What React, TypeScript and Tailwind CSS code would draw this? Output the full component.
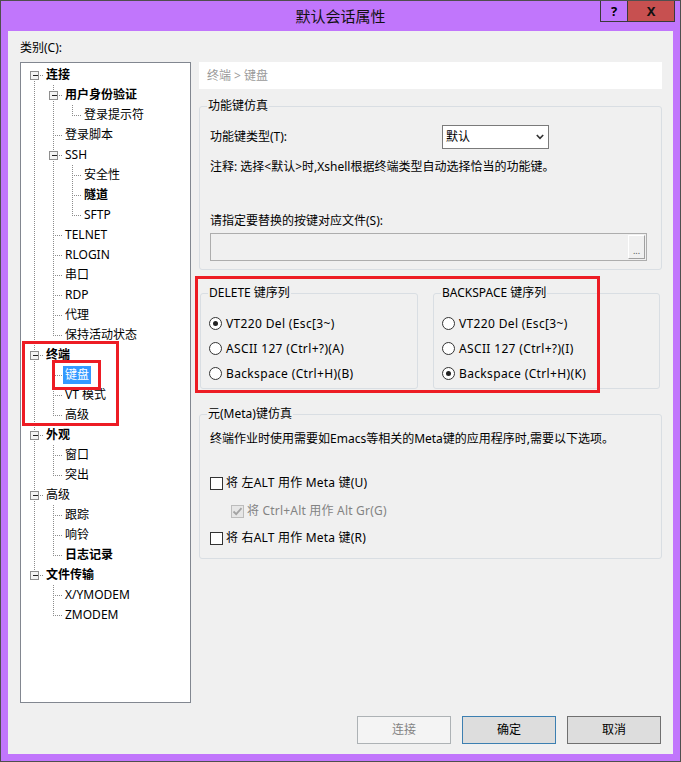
import React from 'react';

type TreeNode = { label: string; bold?: boolean; selected?: boolean; children?: TreeNode[] };

type Row = {
  label: string;
  bold?: boolean;
  selected?: boolean;
  level: number;
  hasChildren: boolean;
  isLast: boolean;
  firstRoot: boolean;
  cont: boolean[];
};

const tree: TreeNode[] = [
  {
    label: '连接',
    bold: true,
    children: [
      { label: '用户身份验证', bold: true, children: [{ label: '登录提示符' }] },
      { label: '登录脚本' },
      { label: 'SSH', children: [{ label: '安全性' }, { label: '隧道', bold: true }, { label: 'SFTP' }] },
      { label: 'TELNET' },
      { label: 'RLOGIN' },
      { label: '串口' },
      { label: 'RDP' },
      { label: '代理' },
      { label: '保持活动状态' },
    ],
  },
  { label: '终端', bold: true, children: [{ label: '键盘', selected: true }, { label: 'VT 模式' }, { label: '高级' }] },
  { label: '外观', bold: true, children: [{ label: '窗口' }, { label: '突出' }] },
  { label: '高级', children: [{ label: '跟踪' }, { label: '响铃' }, { label: '日志记录', bold: true }] },
  { label: '文件传输', bold: true, children: [{ label: 'X/YMODEM' }, { label: 'ZMODEM' }] },
];

function flatten(nodes: TreeNode[], level: number, cont: boolean[], out: Row[]) {
  nodes.forEach((n, i) => {
    const isLast = i === nodes.length - 1;
    out.push({
      label: n.label,
      bold: n.bold,
      selected: n.selected,
      level,
      hasChildren: !!n.children?.length,
      isLast,
      firstRoot: level === 0 && i === 0,
      cont: [...cont],
    });
    if (n.children) flatten(n.children, level + 1, [...cont, !isLast], out);
  });
  return out;
}

const rows = flatten(tree, 0, [], []);
const DOT = '#8c8c8c';

const TreeRow = ({ row }: { row: Row }) => {
  const base = 13 + 19 * row.level;
  const w = base + 10;
  return (
    <div className="flex h-[20px] items-center">
      <svg width={w} height={20} className="shrink-0" shapeRendering="crispEdges">
        {row.cont.map((c, a) =>
          c ? (
            <line key={a} x1={13 + 19 * a + 0.5} y1={0} x2={13 + 19 * a + 0.5} y2={20} stroke={DOT} strokeDasharray="1 1" />
          ) : null
        )}
        <line
          x1={base + 0.5}
          y1={row.firstRoot ? 10 : 0}
          x2={base + 0.5}
          y2={row.isLast ? 11 : 20}
          stroke={DOT}
          strokeDasharray="1 1"
        />
        <line x1={base + (row.hasChildren ? 6 : 2)} y1={10.5} x2={w} y2={10.5} stroke={DOT} strokeDasharray="1 1" />
        {row.hasChildren && (
          <g>
            <rect x={base - 3.5} y={6.5} width={8} height={8} fill="#f4f4f4" stroke="#8f8f8f" />
            <line x1={base - 1} y1={10.5} x2={base + 4} y2={10.5} stroke="#222" />
          </g>
        )}
      </svg>
      <span
        className={`h-[18px] whitespace-nowrap px-[2px] leading-[18px] ${row.bold ? 'font-bold' : ''} ${
          row.selected ? 'bg-[#3399ff] text-white' : 'text-black'
        }`}
      >
        {row.label}
      </span>
    </div>
  );
};

const Radio = ({ checked, label }: { checked?: boolean; label: string }) => (
  <div className="flex h-[25px] items-center">
    <span className="flex h-[13px] w-[13px] shrink-0 items-center justify-center rounded-full border border-[#333] bg-white">
      {checked && <span className="h-[5px] w-[5px] rounded-full bg-[#222]" />}
    </span>
    <span className="ml-[4px] whitespace-nowrap leading-[16px] tracking-[0.35px]">{label}</span>
  </div>
);

const Check = ({ label, disabled, checked }: { label: string; disabled?: boolean; checked?: boolean }) => (
  <div className="flex h-[16px] items-center">
    <span
      className={`flex h-[13px] w-[13px] shrink-0 items-center justify-center border ${
        disabled ? 'border-[#bcbcbc] bg-[#e6e6e6]' : 'border-[#333] bg-white'
      }`}
    >
      {checked && (
        <svg width="11" height="11" viewBox="0 0 11 11">
          <path d="M1.5 5.5 L4.2 8.2 L9.5 2.2" fill="none" stroke="#a3a3a3" strokeWidth="1.8" />
        </svg>
      )}
    </span>
    <span className={`ml-[3px] whitespace-nowrap leading-[16px] tracking-[0.2px] ${disabled ? 'text-[#838383]' : ''}`}>
      {label}
    </span>
  </div>
);

export default function App() {
  return (
    <div className="relative flex h-[762px] w-[681px] flex-col border border-[#4f4f4f] bg-[#c176fc] font-['Noto_Sans','Noto_Sans_CJK_SC',sans-serif] text-[12px] text-black">
      {/* title bar */}
      <div className="relative flex h-[30px] shrink-0 items-center justify-center">
        <span className="text-[15px] leading-[20px] text-[#111]">默认会话属性</span>
        <div className="absolute right-[5px] top-0 flex h-[21px] border border-t-0 border-[#3a3a3a]">
          <div className="flex w-[27px] items-center justify-center border-r border-[#3a3a3a] text-[13px] font-bold leading-none">
            ?
          </div>
          <div className="flex w-[46px] items-center justify-center bg-[#c75050] text-[13px] font-bold leading-none text-[#111]">
            X
          </div>
        </div>
      </div>

      {/* client area */}
      <div className="mx-[7px] flex h-[723px] shrink-0 flex-col bg-[#f0f0f0]">
        <div className="flex h-[672px] pl-[12px]">
          <div className="flex w-[171px] flex-col">
            <div className="h-[31px] pt-[9px] leading-[16px]">类别(C):</div>
            <div className="h-[641px] border border-[#828790] bg-white pt-[2px]">
              {rows.map((r, i) => (
                <TreeRow key={i} row={r} />
              ))}
            </div>
          </div>

          <div className="ml-[8px] flex w-[463px] flex-col pt-[31px]">
            <div className="flex h-[27px] items-center bg-white pl-[8px] text-[#9a9a9a]">终端 &gt; 键盘</div>

            <fieldset className="mt-[9px] rounded-[3px] border border-[#d9dee3]">
              <legend className="ml-[7px] px-[1px] leading-[16px]">功能键仿真</legend>
              <div className="pb-[8px] pl-[10px]">
                <div className="mt-[11px] flex h-[24px] items-center">
                  <span className="w-[232px] leading-[16px]">功能键类型(T):</span>
                  <div className="flex h-[24px] w-[107px] items-center justify-between border border-[#7a7a7a] bg-white pl-[3px] pr-[4px]">
                    <span className="leading-[16px]">默认</span>
                    <svg width="8" height="6" viewBox="0 0 8 6">
                      <path d="M0.8 1 L4 4.4 L7.2 1" fill="none" stroke="#333" strokeWidth="1.6" />
                    </svg>
                  </div>
                </div>
                <div className="mt-[10px] leading-[16px]">注释: 选择&lt;默认&gt;时,Xshell根据终端类型自动选择恰当的功能键。</div>
                <div className="mt-[38px] leading-[16px]">请指定要替换的按键对应文件(S):</div>
                <div className="mt-[4px] flex h-[28px] w-[437px] items-center justify-end border border-[#adadad] bg-[#f0f0f0] pr-[1px]">
                  <div className="flex h-[24px] w-[17px] items-end justify-center border-b border-l border-r border-t border-b-[#a0a0a0] border-l-white border-r-[#a0a0a0] border-t-white pb-[3px] text-[9px] leading-[9px] text-[#555]">
                    ...
                  </div>
                </div>
              </div>
            </fieldset>

            <div className="mt-[15px] flex">
              <fieldset className="ml-[1px] w-[218px] rounded-[3px] border border-[#d9dee3]">
                <legend className="ml-[7px] px-[1px] leading-[16px]">DELETE 键序列</legend>
                <div className="mt-[10px] pb-[2px] pl-[8px]">
                  <Radio checked label="VT220 Del (Esc[3~)" />
                  <Radio label="ASCII 127 (Ctrl+?)(A)" />
                  <Radio label="Backspace (Ctrl+H)(B)" />
                </div>
              </fieldset>
              <fieldset className="ml-[15px] w-[227px] rounded-[3px] border border-[#d9dee3]">
                <legend className="ml-[7px] px-[1px] leading-[16px]">BACKSPACE 键序列</legend>
                <div className="mt-[10px] pb-[2px] pl-[8px]">
                  <Radio label="VT220 Del (Esc[3~)" />
                  <Radio label="ASCII 127 (Ctrl+?)(I)" />
                  <Radio checked label="Backspace (Ctrl+H)(K)" />
                </div>
              </fieldset>
            </div>

            <fieldset className="mt-[17px] rounded-[3px] border border-[#d9dee3]">
              <legend className="ml-[7px] px-[1px] leading-[16px]">元(Meta)键仿真</legend>
              <div className="pb-[12px] pl-[10px]">
                <div className="mt-[9px] leading-[16px]">终端作业时使用需要如Emacs等相关的Meta键的应用程序时,需要以下选项。</div>
                <div className="mt-[28px]">
                  <Check label="将 左ALT 用作 Meta 键(U)" />
                </div>
                <div className="ml-[21px] mt-[12px]">
                  <Check disabled checked label="将 Ctrl+Alt 用作 Alt Gr(G)" />
                </div>
                <div className="mt-[11px]">
                  <Check label="将 右ALT 用作 Meta 键(R)" />
                </div>
              </div>
            </fieldset>
          </div>
        </div>

        {/* buttons */}
        <div className="mt-[13px] flex justify-end gap-[11px] pr-[12px]">
          <div className="flex h-[28px] w-[94px] items-center justify-center border border-[#adb2b5] bg-[#f4f4f4] text-[#838383]">
            连接
          </div>
          <div className="flex h-[28px] w-[94px] items-center justify-center border border-[#3c7fb1] bg-[#dddddd]">
            确定
          </div>
          <div className="flex h-[28px] w-[94px] items-center justify-center border border-[#707070] bg-[#dddddd]">
            取消
          </div>
        </div>
      </div>

      {/* red annotation boxes */}
      <div className="pointer-events-none absolute left-[21px] top-[340px] h-[85px] w-[97px] border-[3px] border-[#ed1c24]" />
      <div className="pointer-events-none absolute left-[51px] top-[359px] h-[30px] w-[49px] border-[3px] border-[#ed1c24]" />
      <div className="pointer-events-none absolute left-[194px] top-[275px] h-[117px] w-[405px] border-[3px] border-[#ed1c24]" />
    </div>
  );
}
